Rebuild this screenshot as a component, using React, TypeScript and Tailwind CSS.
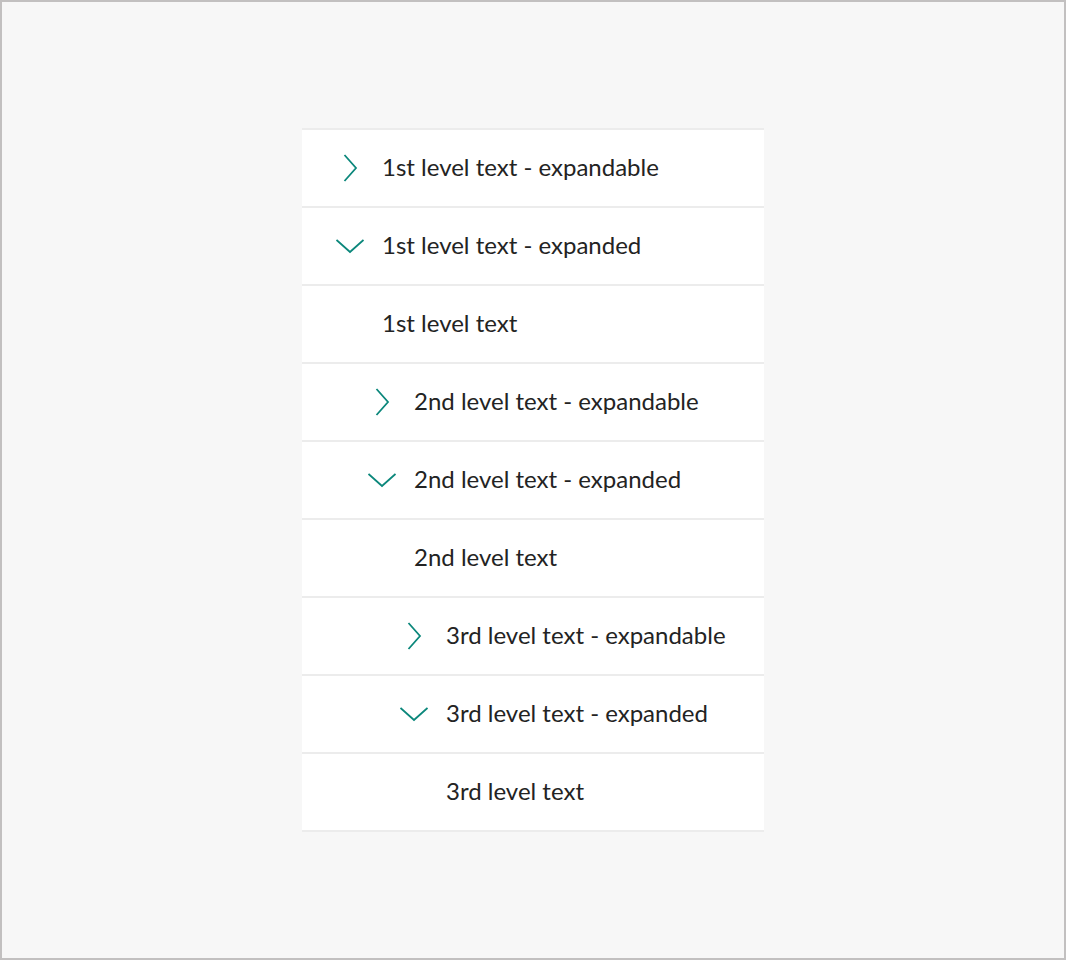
import React from "react";

type Row = { label: string; level: 1 | 2 | 3; icon: "right" | "down" | null };

const rows: Row[] = [
  { label: "1st level text - expandable", level: 1, icon: "right" },
  { label: "1st level text - expanded", level: 1, icon: "down" },
  { label: "1st level text", level: 1, icon: null },
  { label: "2nd level text - expandable", level: 2, icon: "right" },
  { label: "2nd level text - expanded", level: 2, icon: "down" },
  { label: "2nd level text", level: 2, icon: null },
  { label: "3rd level text - expandable", level: 3, icon: "right" },
  { label: "3rd level text - expanded", level: 3, icon: "down" },
  { label: "3rd level text", level: 3, icon: null },
];

const indent = {
  1: "pl-[34px]",
  2: "pl-[66px]",
  3: "pl-[98px]",
};

function Chevron({ dir }: { dir: "right" | "down" }) {
  return (
    <svg width="28" height="28" viewBox="0 0 28 28" fill="none" className="shrink-0">
      {dir === "right" ? (
        <path d="M8.5 1 L20 14 L8.5 27" stroke="#0b877b" strokeWidth="1.8" />
      ) : (
        <path d="M0.5 8 L14 20 L27.5 8" stroke="#0b877b" strokeWidth="1.8" />
      )}
    </svg>
  );
}

export default function App() {
  return (
    <div className="h-screen w-full border-2 border-[#c2c0c0] bg-[#f7f7f7] flex items-center justify-center">
      <div className="w-[462px] bg-white border-t-2 border-[#ececec]">
        {rows.map((row) => (
          <div
            key={row.label}
            className={`h-[78px] border-b-2 border-[#ececec] flex items-center ${indent[row.level]}`}
          >
            <div className="w-[28px] h-[28px] mr-[18px] shrink-0">
              {row.icon && <Chevron dir={row.icon} />}
            </div>
            <span
              className="text-[24px] text-[#232323] leading-none pb-[2px]"
              style={{ fontFamily: "Lato, 'Noto Sans', sans-serif" }}
            >
              {row.label}
            </span>
          </div>
        ))}
      </div>
    </div>
  );
}
